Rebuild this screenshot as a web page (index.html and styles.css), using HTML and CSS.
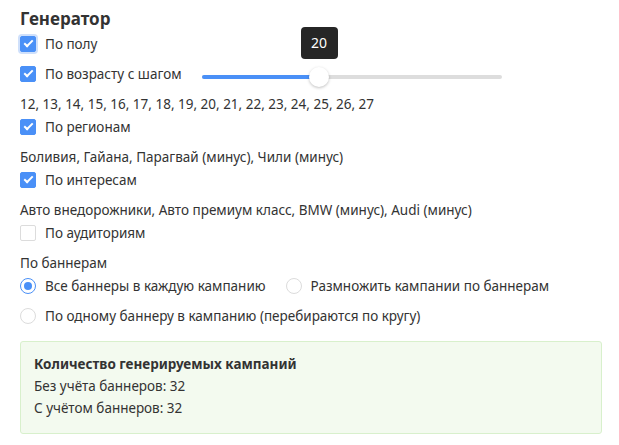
FILE: index.html
```html
<!doctype html>
<html lang="ru">
  <head>
    <meta charset="utf-8">
    <title>Генератор</title>
    <link rel="stylesheet" href="styles.css">
  </head>
  <body>
    <div class="generator">
      <h2 class="title">Генератор</h2>

      <label class="check-row">
        <span class="check checked focused"></span>
        <span>По полу</span>
      </label>

      <div class="check-row">
        <label class="check-label">
          <span class="check checked"></span>
          <span>По возрасту с шагом</span>
        </label>
        <div class="slider">
          <div class="slider-fill" style="width: 39%"></div>
          <div class="slider-thumb" style="left: 39%">
            <div class="slider-tip">20</div>
          </div>
        </div>
      </div>
      <div class="detail">12, 13, 14, 15, 16, 17, 18, 19, 20, 21, 22, 23, 24, 25, 26, 27</div>

      <label class="check-row">
        <span class="check checked"></span>
        <span>По регионам</span>
      </label>
      <div class="detail">Боливия, Гайана, Парагвай (минус), Чили (минус)</div>

      <label class="check-row">
        <span class="check checked"></span>
        <span>По интересам</span>
      </label>
      <div class="detail">Авто внедорожники, Авто премиум класс, BMW (минус), Audi (минус)</div>

      <label class="check-row">
        <span class="check"></span>
        <span>По аудиториям</span>
      </label>

      <div class="detail">По баннерам</div>
      <div class="check-row">
        <label class="radio-label">
          <span class="radio checked"></span>
          <span>Все баннеры в каждую кампанию</span>
        </label>
        <label class="radio-label">
          <span class="radio"></span>
          <span>Размножить кампании по баннерам</span>
        </label>
      </div>
      <label class="check-row">
        <span class="radio"></span>
        <span>По одному баннеру в кампанию (перебираются по кругу)</span>
      </label>

      <div class="summary">
        <div class="summary-title">Количество генерируемых кампаний</div>
        <div>Без учёта баннеров: 32</div>
        <div>С учётом баннеров: 32</div>
      </div>
    </div>
  </body>
</html>
```

FILE: styles.css
```css
body {
    margin: 0;
    padding: 0;
    background-color: #fff;
    color: #333;
    font-family: "Noto Sans", "Open Sans", sans-serif;
    font-size: 13.5px;
}

.generator {
    padding: 7px 17px 0 20px;
}

.title {
    margin: 0 0 2px;
    font-size: 17px;
    line-height: 24px;
    font-weight: 700;
    color: #333;
}

.check-row {
    display: flex;
    align-items: center;
    height: 22px;
    margin-bottom: 8px;
}

.check-label,
.radio-label {
    display: flex;
    align-items: center;
}

.radio-label + .radio-label {
    margin-left: 20px;
}

.detail {
    line-height: 22px;
    margin-bottom: 1px;
}

.check {
    box-sizing: border-box;
    width: 16px;
    height: 16px;
    margin-right: 9px;
    border: 1px solid #dcdcdc;
    border-radius: 2px;
    background: #fff;
    position: relative;
}

.check.checked {
    border-color: #4a90f7;
    background: #4a90f7;
}

.check.checked::after {
    content: "";
    position: absolute;
    left: 3px;
    top: 3px;
    width: 7px;
    height: 3px;
    border-left: 2px solid #fff;
    border-bottom: 2px solid #fff;
    transform: rotate(-45deg);
}

.check.focused {
    box-shadow: 0 0 0 2px #cfe0fb;
}

.radio {
    box-sizing: border-box;
    width: 16px;
    height: 16px;
    margin-right: 9px;
    border: 1px solid #dcdcdc;
    border-radius: 50%;
    background: #fff;
    position: relative;
}

.radio.checked {
    border-color: #4a90f7;
}

.radio.checked::after {
    content: "";
    position: absolute;
    left: 3px;
    top: 3px;
    width: 8px;
    height: 8px;
    border-radius: 50%;
    background: #4a90f7;
}

.slider {
    position: relative;
    width: 300px;
    height: 4px;
    margin: 6px 0 0 20px;
    border-radius: 2px;
    background: #dddddd;
}

.slider-fill {
    height: 4px;
    border-radius: 2px;
    background: #4a90f7;
}

.slider-thumb {
    position: absolute;
    top: -8px;
    width: 20px;
    height: 20px;
    margin-left: -10px;
    border-radius: 50%;
    background: #fff;
    box-shadow: 0 1px 3px rgba(0, 0, 0, 0.25);
}

.slider-tip {
    position: absolute;
    bottom: 28px;
    left: -8px;
    width: 37px;
    height: 32px;
    border-radius: 4px;
    background: #262626;
    color: #fff;
    line-height: 32px;
    text-align: center;
    font-size: 14px;
}

.summary {
    margin-top: 14px;
    padding: 11px 13px 14px;
    border: 1px solid #d8f0cc;
    border-radius: 3px;
    background: #f3faef;
    line-height: 22px;
}

.summary-title {
    font-weight: 700;
}
```
